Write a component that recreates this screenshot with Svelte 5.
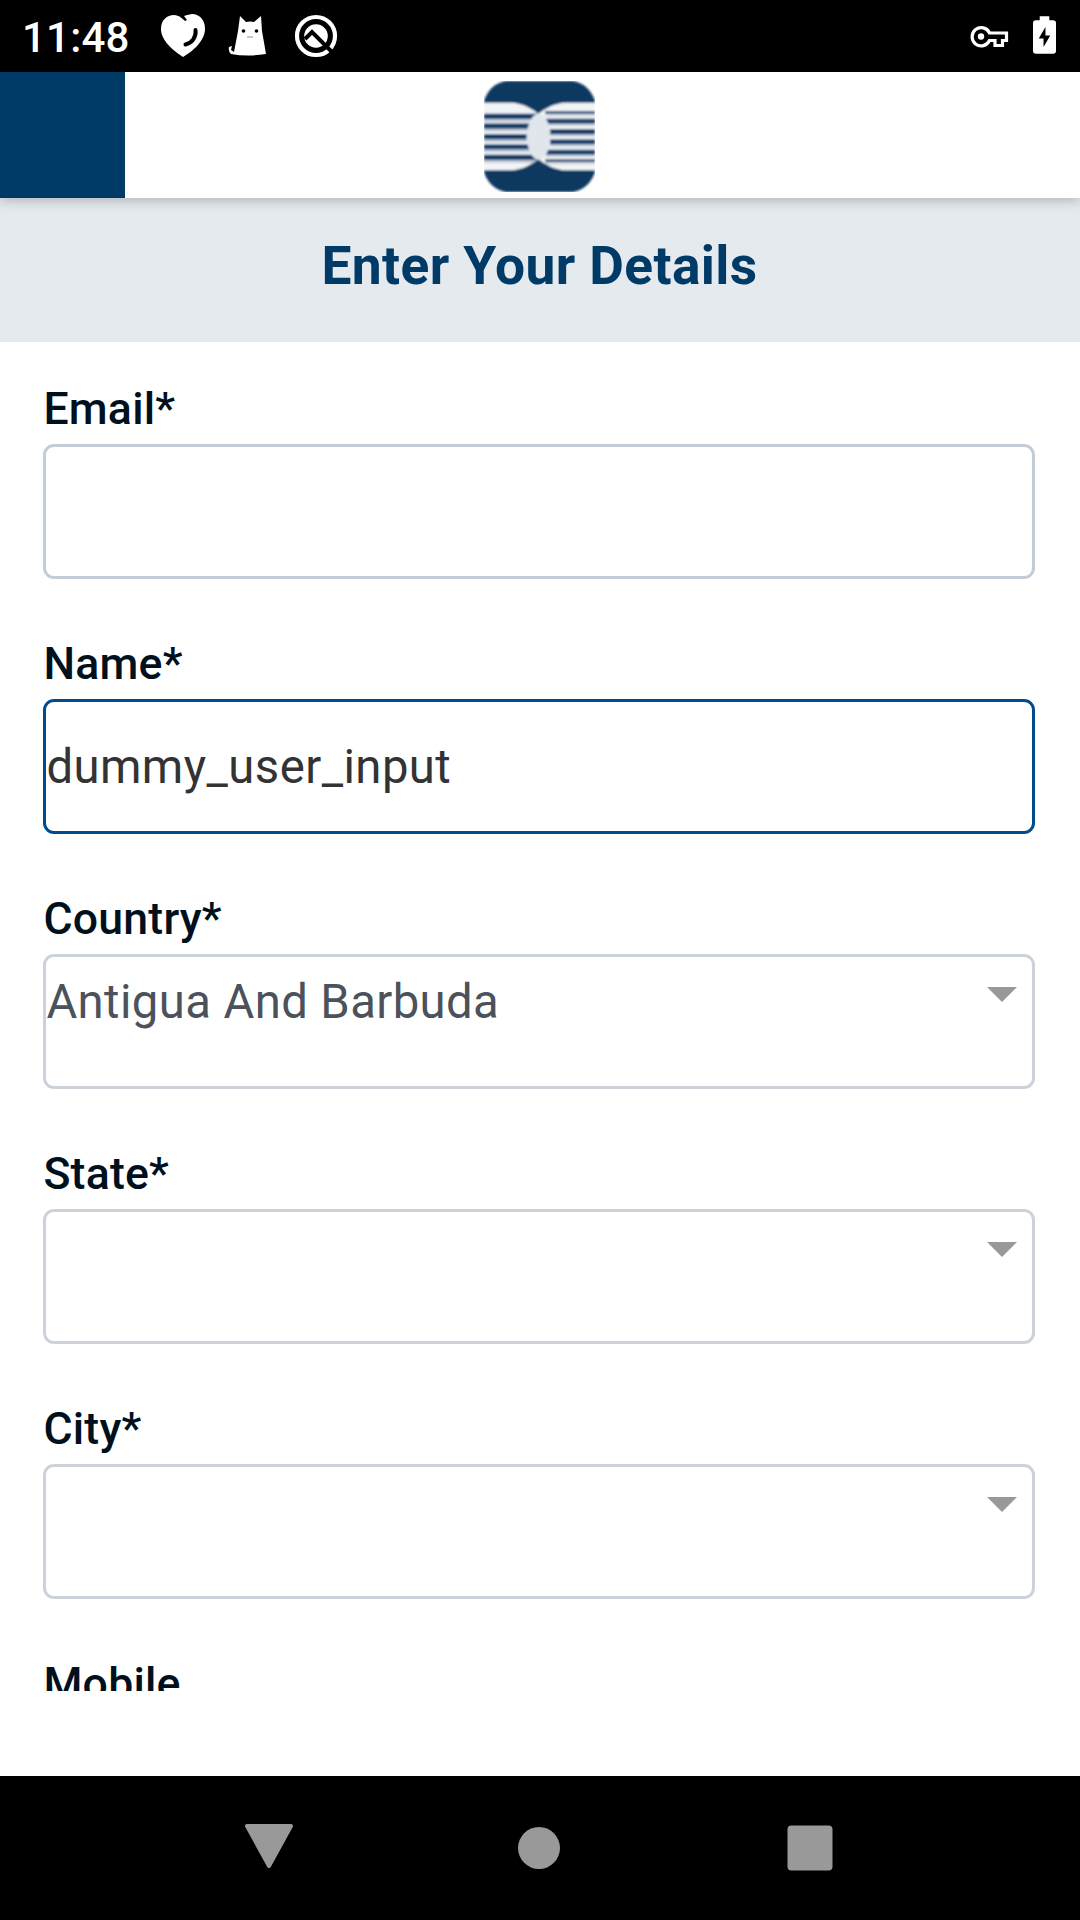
<script>
  const fields = [
    { label: 'Email*', value: '', kind: 'input' },
    { label: 'Name*', value: 'dummy_user_input', kind: 'input', active: true },
    { label: 'Country*', value: 'Antigua And Barbuda', kind: 'select' },
    { label: 'State*', value: '', kind: 'select' },
    { label: 'City*', value: '', kind: 'select' },
  ];
  // [y, height, left edge] of the logo's right-hand stripes
  const rightStripes = [[90, 8, 184], [113, 15, 186], [144, 16, 198], [175, 15, 198], [206, 15, 186], [235, 8, 184]];
  // [y, height, right edge] of the logo's left-hand stripes
  const leftStripes = [[98, 16, 157], [127, 16, 138], [159, 16, 128], [190, 15, 138], [221, 16, 157]];
</script>

<div class="screen">
  <div class="status">
    <span class="time">11:48</span>
    <svg class="heart" width="46" height="46" viewBox="0 0 46 46">
      <path fill="#fff" d="M23 44C14 38 1 28 1 16C1 7 7 2 14 2C18 2 21 4 25 8L27 7L24 3C27 2 30 1 33 1C41 2 45 8 45 16C45 28 32 39 23 44Z" />
      <path d="M35.500 17C36.500 24 32 30 25.500 31.500" fill="none" stroke="#000" stroke-width="4" stroke-linecap="round" />
    </svg>
    <svg class="cat" width="40" height="42" viewBox="0 0 40 42">
      <path fill="#fff" d="M12 1L18 7Q22 6 26 7L33 1L34 16L38 39Q20 42 3 39Q0 36 1 32L4 31L3 35L6 37L10 16Z" />
      <circle cx="15.500" cy="16" r="1.800" /><circle cx="28.500" cy="16" r="1.800" />
      <path d="M19 22H25" stroke="#aaa" stroke-width="1.300" />
    </svg>
    <svg class="quick" width="44" height="44" viewBox="0 0 44 44" fill="none">
      <circle cx="22" cy="22" r="19" stroke="#fff" stroke-width="4.200" />
      <circle cx="22" cy="22" r="11.800" fill="#fff" />
      <path d="M11 25L18 18L40 40" stroke="#000" stroke-width="4" />
    </svg>
    <svg class="key" width="40" height="24" viewBox="0 0 40 24" fill="none">
      <path d="M19.500 7H36.500V14.500H32.500V19.500H25V14.500H19.500A9.100 9.100 0 1 1 19.500 7Z" stroke="#fff" stroke-width="3.200" />
      <circle cx="11" cy="10.500" r="3.200" fill="#fff" />
    </svg>
    <svg class="battery" width="23" height="39" viewBox="0 0 24 40">
      <path fill="#fff" d="M7 0H17V4H21Q24 4 24 7V36Q24 39 21 39H3Q0 39 0 36V7Q0 4 3 4H7Z" />
      <path d="M13 11L6 23H11V32L18 20H13Z" />
    </svg>
  </div>

  <header class="bar">
    <div class="block"></div>
    <svg class="logo" width="111" height="111" viewBox="0 0 333 333">
      <defs>
        <clipPath id="tile"><path d="M66 0H267Q316 10 333 60V273Q316 323 267 333H66Q16 323 0 273V60Q16 10 66 0Z" /></clipPath>
        <filter id="soft" x="-5%" y="-5%" width="110%" height="110%"><feGaussianBlur stdDeviation="2.4" /></filter>
      </defs>
      <g filter="url(#soft)">
        <g clip-path="url(#tile)">
          <rect width="333" height="333" fill="#0d375f" />
          <path fill="#f2f5f8" d="M0 65H80C115 66 145 83 163 98C181 83 211 66 246 65H333V268H246C211 267 181 250 163 235C145 250 115 267 80 268H0Z" />
          {#each leftStripes as [y, h, edge]}
            <rect x="0" y={y + h} width={edge} height="8" fill="#bcc7d5" />
            <rect x="0" {y} width={edge} height={h} fill="#0f3b66" />
          {/each}
          {#each rightStripes as [y, h, edge]}
            <rect x={edge} y={y + h} width="160" height="7" fill="#cbd4df" />
            <rect x={edge} {y} width="160" height={h} fill="#123e6a" />
          {/each}
          <ellipse cx="164" cy="167" rx="35" ry="69" fill="#e1e6ed" />
          <path fill="#0d375f" d="M130 77Q148 85 163 98Q178 85 196 77ZM130 256Q148 248 163 235Q178 248 196 256Z" />
        </g>
      </g>
    </svg>
  </header>

  <h1>Enter Your Details</h1>

  <main>
    {#each fields as field}
      <section>
        <div class="label">{field.label}</div>
        <div class="box {field.kind}" class:active={field.active}>
          <span>{field.value}</span>
          {#if field.kind === 'select'}
            <svg class="arrow" width="30" height="15" viewBox="0 0 30 15"><path d="M0 0H30L15 15Z" fill="#999" /></svg>
          {/if}
        </div>
      </section>
    {/each}
    <div class="label">Mobile</div>
  </main>

  <nav>
    <svg width="50" height="50" viewBox="0 0 50 50"><path d="M3 3H47L25 43Z" fill="#999" stroke="#999" stroke-width="4" stroke-linejoin="round" /></svg>
    <svg width="50" height="50" viewBox="0 0 50 50"><circle cx="25" cy="25" r="21" fill="#999" /></svg>
    <svg width="50" height="50" viewBox="0 0 50 50"><rect x="2.500" y="2.500" width="45" height="45" rx="4" fill="#999" /></svg>
  </nav>
</div>

<style>
  :global(body) { margin: 0; }
  .screen {
    width: 1080px; height: 1920px; overflow: hidden;
    display: flex; flex-direction: column;
    background: #fff; font-family: Roboto, sans-serif;
  }
  svg { display: block; flex: none; }
  .status { height: 72px; flex: none; box-sizing: border-box; background: #000; display: flex; align-items: flex-start; padding: 0 24px 0 22px; }
  .time { width: 138px; color: #fff; font-size: 42px; font-weight: 500; line-height: 76px; letter-spacing: .2px; }
  .heart { margin-top: 13px; }
  .cat { margin: 15px 0 0 22px; }
  .quick { margin: 14px 0 0 26px; }
  .key { margin: 26px 23px 0 auto; }
  .battery { margin-top: 16px; }
  .bar {
    height: 126px; flex: none; display: grid; grid-template-columns: 484px 111px 1fr; align-items: center;
    background: #fff; box-shadow: 0 2px 12px rgba(0, 0, 0, .25); z-index: 1;
    clip-path: inset(0 0 -30px 0);
  }
  .block { width: 124.600px; height: 126px; background: #003a67; }
  .logo { margin-top: 2px; }
  h1 {
    margin: 0; height: 144px; flex: none; box-sizing: border-box; padding: 38px 1px 0 0;
    background: #e5eaee; color: #003a67; text-align: center;
    font-size: 53.300px; font-weight: 700; line-height: 60px; letter-spacing: .4px;
  }
  main { height: 1349px; flex: none; overflow: hidden; box-sizing: border-box; padding: 41px 45px 0 43.400px; }
  section { margin-bottom: 59px; }
  .label { color: #00101d; font-size: 44.600px; font-weight: 500; line-height: 52px; letter-spacing: .22px; }
  .box {
    margin-top: 9px; height: 135px; box-sizing: border-box; border: 3px solid #c3cdd7; border-radius: 11px;
    display: flex; align-items: center; justify-content: space-between;
    color: #333; font-size: 47.250px; line-height: 56px; letter-spacing: .45px;
  }
  .box.active { border-color: #004b8d; }
  .box.select { align-items: flex-start; border-color: #ccd2da; color: #4b525b; letter-spacing: .4px; }
  .select span { padding-top: 17px; }
  .arrow { margin: 30px 15px 0 0; }
  nav {
    margin-top: auto; height: 144px; flex: none; box-sizing: border-box; padding-right: 2px; background: #000;
    display: flex; align-items: center; justify-content: center; gap: 220.500px;
  }
</style>
